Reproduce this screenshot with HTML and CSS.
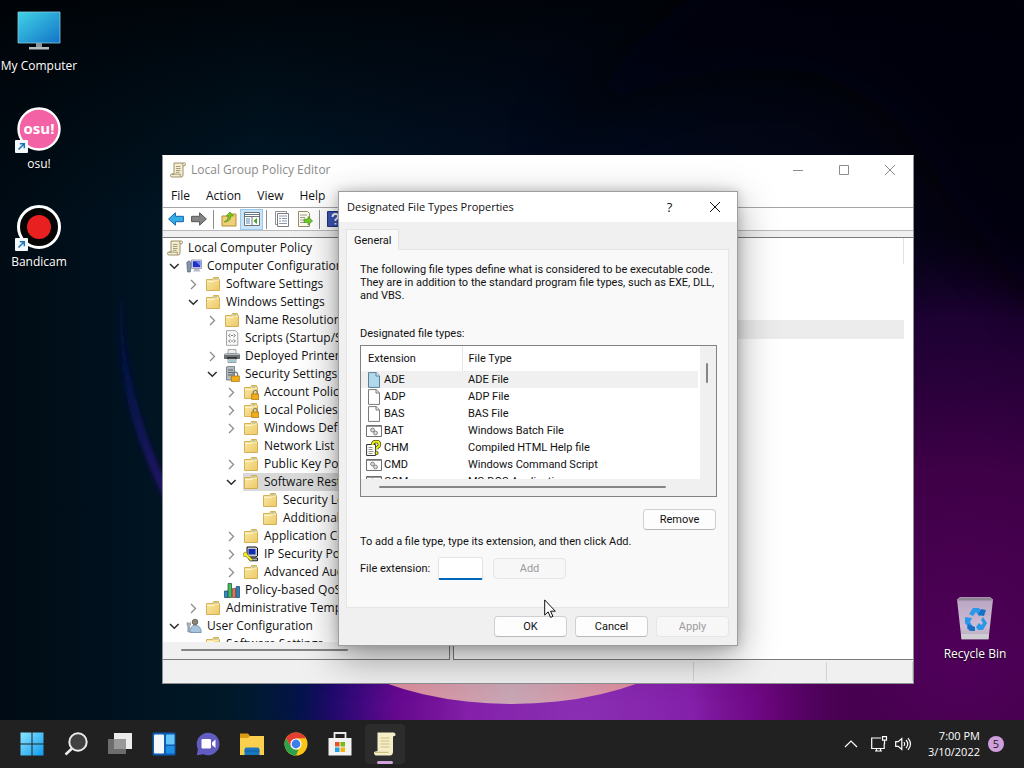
FILE: index.html
```html
<!DOCTYPE html>
<html lang="en">
<head>
<meta charset="utf-8">
<title>Desktop</title>
<link rel="stylesheet" href="styles.css">
</head>
<body>
<svg class="sprites" aria-hidden="true">
  <defs>
    <linearGradient id="gFolder" x1="0" y1="0" x2="1" y2="1"><stop offset="0" stop-color="#fbe9a9"/><stop offset="1" stop-color="#ecc964"/></linearGradient>
    <linearGradient id="gScreen" x1="0" y1="0" x2="1" y2="1"><stop offset="0" stop-color="#3fd3e6"/><stop offset="1" stop-color="#1473c8"/></linearGradient>
    <linearGradient id="gWin" x1="0" y1="0" x2="1" y2="1"><stop offset="0" stop-color="#8be6ff"/><stop offset="1" stop-color="#0f9bee"/></linearGradient>
    <linearGradient id="gBin" x1="0" y1="0" x2="0" y2="1"><stop offset="0" stop-color="#b9a4c2"/><stop offset=".7" stop-color="#cdbdd4"/><stop offset="1" stop-color="#b3aab8"/></linearGradient>
    <symbol id="scroll" viewBox="0 0 16 16">
      <path d="M4 1h10.500q1 .2 1 1.500t-1.500 1.300h-1V13q0 2-1.700 2H2Q.5 15 .5 13.500T2 12h2z" fill="#f3eed2" stroke="#93855c" stroke-width=".9"/>
      <path d="M2 12.200h8.500q-.9 1.500.6 2.600M13 3.800q-1.200-1 0-2.700M6 4.500h4.500M6 6.500h4.500M6 8.500h4.500M6 10.300h3.500" fill="none" stroke="#93855c" stroke-width=".8"/>
    </symbol>
    <symbol id="folder" viewBox="0 0 16 16">
      <path d="M1.500 14.500v-11h6l1-2h5v2h1v11z" fill="url(#gFolder)" stroke="#cfa84c" stroke-width=".9"/>
      <path d="M2 5.500h7l1.300-1.500H14" fill="none" stroke="#fff6cf" stroke-width="1"/>
      <path d="M9 3h3.500" stroke="#8fb3a0" stroke-width="1"/>
    </symbol>
    <symbol id="lockfolder" viewBox="0 0 16 16">
      <use href="#folder"/>
      <path d="M10.200 10V8.500a2 2 0 0 1 4 0V10" fill="none" stroke="#7a7a7a" stroke-width="1.200"/>
      <rect x="8.700" y="10" width="7" height="5.500" fill="#efad1c" stroke="#a87407" stroke-width=".7"/>
    </symbol>
    <symbol id="script" viewBox="0 0 16 16">
      <path d="M2.500.7h9l2.300 2.300v12.300H2.500z" fill="#fbfbfb" stroke="#989898" stroke-width=".9"/>
      <path d="M6.500 4L4.500 5.500l2 1.500M9.500 4l2 1.500-2 1.500M6.500 9.500L4.500 11l2 1.500M9.500 9.500l2 1.500-2 1.500M7 5.500h2M7 11h2" fill="none" stroke="#6b6b6b" stroke-width=".9"/>
    </symbol>
    <symbol id="printer" viewBox="0 0 16 16">
      <path d="M4 1.500h8V6H4z" fill="#e8eef2" stroke="#888" stroke-width=".7"/>
      <path d="M1 5.500h14l1 1.500v4H0V7z" fill="#6f7275"/>
      <path d="M1 6.500h14" stroke="#b7babd"/>
      <path d="M3 9h10v2H3z" fill="#2f3234"/>
      <path d="M4 11h8v3.500H4z" fill="#e9eef0" stroke="#777" stroke-width=".7"/>
      <path d="M5 13h6" stroke="#48a7bd"/>
    </symbol>
    <symbol id="server" viewBox="0 0 16 16">
      <path d="M2.500 1L5 .3h5.500V14H2.500z" fill="#b3bac0" stroke="#666d73" stroke-width=".8"/>
      <path d="M4 4h5M4 6.500h5M4 9h4" stroke="#59646c"/>
      <path d="M9 10V8.500a2.300 2.300 0 0 1 4.600 0V10" fill="none" stroke="#777" stroke-width="1.200"/>
      <rect x="7.300" y="10" width="8" height="5.500" fill="#efad1c" stroke="#a87407" stroke-width=".7"/>
    </symbol>
    <symbol id="computer" viewBox="0 0 16 16">
      <path d="M5.500 2h10v8.500h-10z" fill="#dfe2ef" stroke="#888ca8" stroke-width=".8"/>
      <path d="M6.800 3.200h7.500v6H6.800z" fill="#1d2fc4"/>
      <path d="M9.500 3.200h4.800V8z" fill="#6c84ef"/>
      <path d="M8.500 11h4.500l1.500 2.500H7z" fill="#b7b9c9"/>
      <path d="M.8 4.500q1-2 3-1.500l1.200 2-.7 9H1.500z" fill="#7c96ad" stroke="#46586b" stroke-width=".6"/>
    </symbol>
    <symbol id="ipsec" viewBox="0 0 16 16">
      <path d="M4 1h9l1.500 1v8l-1.500 1H4z" fill="#c9cbd0" stroke="#111" stroke-width="1"/>
      <path d="M5.500 3h7v5.500h-7z" fill="#102bb4"/>
      <path d="M5 12h9.500v2.800H7z" fill="#aeb0b6" stroke="#111" stroke-width=".9"/>
      <path d="M.5 7l3-1 1 2.500 5 5-1.500 1.700-5-4.700H.7z" fill="#f6ee1e" stroke="#6a6500" stroke-width=".5"/>
    </symbol>
    <symbol id="bars" viewBox="0 0 16 16">
      <path d="M.5 9h3.500v6.500H.5z" fill="#2e8ccc" stroke="#1c3d53" stroke-width=".7"/>
      <path d="M4 1.500h3.500v14H4z" fill="#3fbf58" stroke="#1c4a32" stroke-width=".7"/>
      <path d="M8.500 6.500h3v9h-3z" fill="#e2735a" stroke="#64402f" stroke-width=".7"/>
      <path d="M12.200 4.500h3.300v11h-3.300z" fill="#2882b8" stroke="#183b5e" stroke-width=".7"/>
    </symbol>
    <symbol id="user" viewBox="0 0 16 16">
      <circle cx="9" cy="4" r="2.800" fill="#8d8473" stroke="#4d4a44" stroke-width=".7"/>
      <path d="M4 14.500q0-7 5-7.300 6 .3 6.300 7.300z" fill="#a7c3e0" stroke="#5f7d9c" stroke-width=".7"/>
      <path d="M1 4.500l2 1 1.500-1v2.500L3.500 8v6H1.800V8L1 7z" fill="#a9b7c4" stroke="#65737f" stroke-width=".5"/>
    </symbol>
    <symbol id="closed" viewBox="0 0 16 16"><path d="M6 4l4.500 4.500L6 13" fill="none" stroke="#8b8b8b" stroke-width="1.300"/></symbol>
    <symbol id="open" viewBox="0 0 16 16"><path d="M4 6l4.300 4.300L12.600 6" fill="none" stroke="#2b2b2b" stroke-width="1.500"/></symbol>
    <symbol id="page" viewBox="0 0 16 16"><path d="M2.500.6h7.700l3.300 3.300v11.500h-11z" fill="#fff" stroke="#7a7a7a"/><path d="M10 .6V4h3.500" fill="none" stroke="#7a7a7a"/></symbol>
    <symbol id="pagesel" viewBox="0 0 16 16"><path d="M2.500.6h7.700l3.300 3.300v11.500h-11z" fill="#b1d9ee" stroke="#5d7e90"/><path d="M10 .6V4h3.500" fill="#e6f4fb" stroke="#5d7e90"/></symbol>
    <symbol id="batch" viewBox="0 0 16 16"><path d="M.5 2.500h15v11H.5z" fill="#fff" stroke="#707070"/><path d="M1 3.500h14" stroke="#9b9b9b"/><circle cx="6.500" cy="7" r="1.900" fill="#ddd" stroke="#828282"/><circle cx="9.500" cy="10" r="1.900" fill="#ddd" stroke="#828282"/></symbol>
    <symbol id="chm" viewBox="0 0 16 16"><path d="M.6 4.500h9v11h-9z" fill="#fff" stroke="#333"/><path d="M2.500 7.500h4M2.500 9.500h4M2.500 11.500h5M2.500 13.500h4" stroke="#777" stroke-width=".8"/><path d="M6.500 5q0-3.500 3.500-3.500t3.500 3q0 1.700-2 2.700-.9.500-.9 2" fill="none" stroke="#33330a" stroke-width="3.400"/><path d="M6.500 5q0-3.500 3.500-3.500t3.500 3q0 1.700-2 2.700-.9.500-.9 2" fill="none" stroke="#eef013" stroke-width="2"/><circle cx="10.600" cy="13" r="1.600" fill="#eef013" stroke="#33330a" stroke-width=".8"/></symbol>
    <symbol id="shortcut" viewBox="0 0 13 13"><rect width="13" height="13" rx="1" fill="#f4f8fb"/><path d="M3.500 9.500l5-5M4.800 3.800h4.500v4.500" fill="none" stroke="#1a74b8" stroke-width="1.500"/></symbol>
  </defs>
</svg>

<main class="desktop">
  <svg class="wallpaper" viewBox="0 0 1024 720" preserveAspectRatio="none" aria-hidden="true">
    <defs>
      <linearGradient id="wBase" x1="0" y1="0" x2="1" y2="0"><stop offset="0" stop-color="#000b14"/><stop offset=".25" stop-color="#001a2b"/><stop offset=".55" stop-color="#020c24"/><stop offset="1" stop-color="#05010f"/></linearGradient>
      <linearGradient id="wTop" x1="0" y1="0" x2="0" y2="1"><stop offset="0" stop-color="#000307" stop-opacity=".9"/><stop offset=".3" stop-color="#000307" stop-opacity="0"/></linearGradient>
      <radialGradient id="wPurple" cx="960" cy="660" r="430" gradientUnits="userSpaceOnUse"><stop offset="0" stop-color="#50005a"/><stop offset=".45" stop-color="#3e0046"/><stop offset=".8" stop-color="#26003f" stop-opacity=".7"/><stop offset="1" stop-color="#10002a" stop-opacity="0"/></radialGradient>
      <radialGradient id="wBlue" cx="400" cy="700" r="170" gradientUnits="userSpaceOnUse"><stop offset="0" stop-color="#1a0f96"/><stop offset=".4" stop-color="#080a6c" stop-opacity=".9"/><stop offset="1" stop-color="#001a44" stop-opacity="0"/></radialGradient>
      <radialGradient id="wGlow" cx="580" cy="720" r="280" gradientUnits="userSpaceOnUse"><stop offset="0" stop-color="#8a30b4"/><stop offset=".4" stop-color="#8420aa"/><stop offset=".65" stop-color="#7a0890" stop-opacity=".8"/><stop offset="1" stop-color="#600070" stop-opacity="0"/></radialGradient>
      <linearGradient id="wSun" x1="0" y1="0" x2="1" y2="0"><stop offset="0" stop-color="#c7649a"/><stop offset=".25" stop-color="#dc8d9c"/><stop offset=".5" stop-color="#c8a6b5"/><stop offset=".8" stop-color="#e2899b"/><stop offset="1" stop-color="#b65aa8"/></linearGradient>
      <linearGradient id="wArc" x1="0" y1="280" x2="0" y2="580" gradientUnits="userSpaceOnUse"><stop offset="0" stop-color="#001d55" stop-opacity="0"/><stop offset=".35" stop-color="#0a1266"/><stop offset=".7" stop-color="#3c12a0"/><stop offset="1" stop-color="#20108a"/></linearGradient>
      <filter id="soft"><feGaussianBlur stdDeviation="3"/></filter>
      <filter id="softer"><feGaussianBlur stdDeviation="24"/></filter>
    </defs>
    <rect width="1024" height="720" fill="url(#wBase)"/>
    <rect width="1024" height="720" fill="url(#wTop)"/>
    <rect width="1024" height="720" fill="url(#wPurple)"/>
    <rect width="1024" height="720" fill="url(#wBlue)"/>
    <rect width="1024" height="720" fill="url(#wGlow)"/>
    <path d="M122 290Q114 400 180 520" fill="none" stroke="url(#wArc)" stroke-width="5" filter="url(#soft)"/>
    <path d="M540 155Q640 60 800 70Q900 90 950 200L1060 330V-40H740Q600 60 540 155z" fill="#020008" opacity=".7" filter="url(#softer)"/>
    <ellipse cx="512" cy="575" rx="232" ry="129" fill="url(#wSun)"/>
  </svg>

  <nav class="shortcuts" aria-label="Desktop shortcuts">
    <a class="shortcut" href="#computer-link">
      <svg class="shortcut-icon" viewBox="0 0 48 48"><path d="M3 5h42v31H3z" fill="url(#gScreen)" stroke="#8cc9dc" stroke-width=".8"/><path d="M21 36h6v5h-6z" fill="#8b969d"/><path d="M14 40h20v2.500H14z" fill="#b5bec4"/></svg>
      <span>My Computer</span>
    </a>
    <a class="shortcut" href="#osu">
      <svg class="shortcut-icon" viewBox="0 0 48 48"><circle cx="24" cy="24" r="20.500" fill="#f362a4" stroke="#fff" stroke-width="2.400"/><text x="24" y="29" class="osu-text">osu!</text><use href="#shortcut" x="0" y="35" width="13" height="13"/></svg>
      <span>osu!</span>
    </a>
    <a class="shortcut" href="#bandicam">
      <svg class="shortcut-icon" viewBox="0 0 48 48"><circle cx="24" cy="24" r="20.500" fill="#050505" stroke="#fff" stroke-width="3"/><circle cx="24" cy="24" r="12" fill="#e8201f"/><use href="#shortcut" x="0" y="35" width="13" height="13"/></svg>
      <span>Bandicam</span>
    </a>
  </nav>

  <a class="shortcut recycle" href="#recycle">
    <svg class="shortcut-icon" viewBox="0 0 48 48"><path d="M6 4.500L9 2h30l3 2.500-4.500 40H10.500z" fill="url(#gBin)"/><path d="M6 5.500L9 2.500h30l3 3z" fill="#8e8494"/><path d="M10 39h28l-.6 5H10.600z" fill="#cfcbd2"/><g fill="#2a97ea"><path d="M18 19l4-6h6l4 6-4 2-3-4-3 4z"/><path d="M30 14l5 1-2 6-6-1z" fill="#1670c8"/><path d="M14 22l7 1-2 4 3 5-4 1-4-5z"/><path d="M17 29l7 3v4h-5l-3-3z" fill="#1670c8"/><path d="M32 22l4 6-4 7h-5l-2-3 3-4 2 2 2-2-2-3z"/></g></svg>
    <span>Recycle Bin</span>
  </a>

  <section class="window" aria-label="Local Group Policy Editor">
    <header class="titlebar">
      <svg class="i16"><use href="#scroll"/></svg>
      <h1>Local Group Policy Editor</h1>
      <button class="caption" aria-label="Minimize"><svg viewBox="0 0 12 12"><path d="M1 6.500h10"/></svg></button>
      <button class="caption" aria-label="Maximize"><svg viewBox="0 0 12 12"><path d="M1.500 1.500h9v9h-9z"/></svg></button>
      <button class="caption" aria-label="Close"><svg viewBox="0 0 12 12"><path d="M1 1l10 10M11 1L1 11"/></svg></button>
    </header>
    <nav class="menubar"><button>File</button><button>Action</button><button>View</button><button>Help</button></nav>
    <div class="toolbar">
      <button aria-label="Back"><svg class="i16" viewBox="0 0 16 16"><path d="M.6 8l6.800-6.200v3.500h8v5.400h-8v3.500z" fill="#35aee8" stroke="#1565a8"/></svg></button>
      <button aria-label="Forward"><svg class="i16" viewBox="0 0 16 16"><path d="M15.400 8L8.600 1.800v3.500h-8v5.400h8v3.500z" fill="#858585" stroke="#555"/></svg></button>
      <i></i>
      <button aria-label="Up"><svg class="i16" viewBox="0 0 16 16"><path d="M1 5h7l1-2h6v12H1z" fill="#efcf78" stroke="#b78e34"/><path d="M3 11q4-1 4.500-6H5l4-4 3.500 4H10q-.5 6-7 6z" fill="#76c61f" stroke="#4a8b0e" stroke-width=".6"/></svg></button>
      <button class="pressed" aria-label="Console tree"><svg class="i16" viewBox="0 0 16 16"><path d="M.5 1.500h15v13H.5z" fill="#fff" stroke="#69747d"/><path d="M1 3.500h14M1 5.500h14M8 5.500v9" stroke="#69747d"/><path d="M2 8h4M2 10h4M2 12h4" stroke="#5d88b8"/><path d="M13 7v6L9.500 10z" fill="#3da51c"/></svg></button>
      <i></i>
      <button aria-label="Properties"><svg class="i16" viewBox="0 0 16 16"><path d="M1.500.5h11v13h-11z" fill="#fff" stroke="#8f8f8f"/><path d="M3.500 2.500h11v13h-11z" fill="#fff" stroke="#7e7e7e"/><path d="M5 5h8M5 7.500h2M8 7.500h5M5 10h2M8 10h5M5 12.500h8" stroke="#8799b0"/></svg></button>
      <button aria-label="Export list"><svg class="i16" viewBox="0 0 16 16"><path d="M1.500.5h9l2 2v13h-11z" fill="#fffdf0" stroke="#948c68"/><path d="M3 4h7M3 6.500h5M3 9h4M3 11.500h5" stroke="#9a9a9a"/><path d="M7 8h4V5.500L15.600 10 11 14v-2.500H7z" fill="#72c92d" stroke="#408f13" stroke-width=".6"/></svg></button>
      <i></i>
      <button aria-label="Help"><svg class="i16" viewBox="0 0 16 16"><path d="M.5.500h15v15H.5z" fill="#3c54b5" stroke="#22357f"/><path d="M5.500 6q0-3 3-3t2.500 2.500-2.500 3V10M8.500 12v1.500" fill="none" stroke="#fff" stroke-width="1.800"/></svg></button>
    </div>
    <div class="panes">
      <div class="tree-pane">
        <ul class="tree">
          <li class="root"><svg class="ic"><use href="#scroll"/></svg>Local Computer Policy</li>
          <li><svg class="tw"><use href="#open"/></svg><svg class="ic"><use href="#computer"/></svg>Computer Configuration</li>
          <li class="l1"><svg class="tw"><use href="#closed"/></svg><svg class="ic"><use href="#folder"/></svg>Software Settings</li>
          <li class="l1"><svg class="tw"><use href="#open"/></svg><svg class="ic"><use href="#folder"/></svg>Windows Settings</li>
          <li class="l2"><svg class="tw"><use href="#closed"/></svg><svg class="ic"><use href="#folder"/></svg>Name Resolution</li>
          <li class="l2"><svg class="tw"></svg><svg class="ic"><use href="#script"/></svg>Scripts (Startup/Sh</li>
          <li class="l2"><svg class="tw"><use href="#closed"/></svg><svg class="ic"><use href="#printer"/></svg>Deployed Printers</li>
          <li class="l2"><svg class="tw"><use href="#open"/></svg><svg class="ic"><use href="#server"/></svg>Security Settings</li>
          <li class="l3"><svg class="tw"><use href="#closed"/></svg><svg class="ic"><use href="#lockfolder"/></svg>Account Polici</li>
          <li class="l3"><svg class="tw"><use href="#closed"/></svg><svg class="ic"><use href="#lockfolder"/></svg>Local Policies</li>
          <li class="l3"><svg class="tw"><use href="#closed"/></svg><svg class="ic"><use href="#folder"/></svg>Windows Defen</li>
          <li class="l3"><svg class="tw"></svg><svg class="ic"><use href="#folder"/></svg>Network List M</li>
          <li class="l3"><svg class="tw"><use href="#closed"/></svg><svg class="ic"><use href="#folder"/></svg>Public Key Poli</li>
          <li class="l3"><svg class="tw"><use href="#open"/></svg><span class="selected"><svg class="ic"><use href="#folder"/></svg>Software Restri</span></li>
          <li class="l4"><svg class="tw"></svg><svg class="ic"><use href="#folder"/></svg>Security Lev</li>
          <li class="l4"><svg class="tw"></svg><svg class="ic"><use href="#folder"/></svg>Additional R</li>
          <li class="l3"><svg class="tw"><use href="#closed"/></svg><svg class="ic"><use href="#folder"/></svg>Application Co</li>
          <li class="l3"><svg class="tw"><use href="#closed"/></svg><svg class="ic"><use href="#ipsec"/></svg>IP Security Poli</li>
          <li class="l3"><svg class="tw"><use href="#closed"/></svg><svg class="ic"><use href="#folder"/></svg>Advanced Aud</li>
          <li class="l2"><svg class="tw"></svg><svg class="ic"><use href="#bars"/></svg>Policy-based QoS</li>
          <li class="l1"><svg class="tw"><use href="#closed"/></svg><svg class="ic"><use href="#folder"/></svg>Administrative Templ</li>
          <li><svg class="tw"><use href="#open"/></svg><svg class="ic"><use href="#user"/></svg>User Configuration</li>
          <li class="l1"><svg class="tw"></svg><svg class="ic"><use href="#folder"/></svg>Software Settings</li>
        </ul>
        <div class="hscroll"><span></span></div>
      </div>
      <div class="detail"><div class="detail-head"></div><div class="detail-row"></div></div>
    </div>
    <footer class="statusbar"><span></span><span></span><span></span></footer>
  </section>

  <section class="dialog" role="dialog" aria-label="Designated File Types Properties">
    <header class="dialog-title">
      <h2>Designated File Types Properties</h2>
      <button class="caption help" aria-label="Help">?</button>
      <button class="caption" aria-label="Close"><svg viewBox="0 0 12 12"><path d="M1 1l10 10M11 1L1 11"/></svg></button>
    </header>
    <div class="dialog-body">
      <button class="tab">General</button>
      <div class="panel">
        <p class="intro">The following file types define what is considered to be executable code. They are in addition to the standard program file types, such as EXE, DLL, and VBS.</p>
        <p class="list-label">Designated file types:</p>
        <div class="listbox">
          <div class="list-view">
            <table>
              <thead><tr><th>Extension</th><th>File Type</th></tr></thead>
              <tbody>
                <tr class="current"><td><svg><use href="#pagesel"/></svg>ADE</td><td>ADE File</td></tr>
                <tr><td><svg><use href="#page"/></svg>ADP</td><td>ADP File</td></tr>
                <tr><td><svg><use href="#page"/></svg>BAS</td><td>BAS File</td></tr>
                <tr><td><svg><use href="#batch"/></svg>BAT</td><td>Windows Batch File</td></tr>
                <tr><td><svg><use href="#chm"/></svg>CHM</td><td>Compiled HTML Help file</td></tr>
                <tr><td><svg><use href="#batch"/></svg>CMD</td><td>Windows Command Script</td></tr>
                <tr><td><svg><use href="#batch"/></svg>COM</td><td>MS-DOS Application</td></tr>
              </tbody>
            </table>
          </div>
          <div class="vscroll"><span></span></div>
          <div class="list-hscroll"><span></span></div>
        </div>
        <div class="remove-row"><button class="btn">Remove</button></div>
        <p class="hint">To add a file type, type its extension, and then click Add.</p>
        <div class="add-row"><label for="ext">File extension:</label><input id="ext" type="text"><button class="btn" disabled>Add</button></div>
      </div>
      <div class="actions"><button class="btn">OK</button><button class="btn">Cancel</button><button class="btn" disabled>Apply</button></div>
    </div>
  </section>

  <svg class="cursor" viewBox="0 0 12 20" aria-hidden="true"><path d="M.7.900v15.200l3.500-3.200 2.300 5.500 2.400-1-2.300-5.200h4.700z" fill="#fff" stroke="#111"/></svg>
</main>

<footer class="taskbar">
  <div class="apps">
    <button aria-label="Start"><svg viewBox="0 0 24 24"><path d="M.5.500h11v11H.5zM12.500.500h11v11h-11zM.5 12.500h11v11H.5zM12.500 12.500h11v11h-11z" fill="url(#gWin)"/></svg></button>
    <button aria-label="Search"><svg viewBox="0 0 24 24"><circle cx="14" cy="10" r="8.700" fill="#414141" stroke="#ececec" stroke-width="2"/><path d="M8 16.500L1.500 22.500" stroke="#ececec" stroke-width="2.500"/></svg></button>
    <button aria-label="Task view"><svg viewBox="0 0 24 24"><path d="M6 1h18v16H6z" fill="#ececec"/><path d="M0 7h18v15H0z" fill="#6d6d6d"/><path d="M6 7h12v10H6z" fill="#999"/></svg></button>
    <button aria-label="Widgets"><svg viewBox="0 0 24 24"><rect x=".5" y=".5" width="23" height="23" rx="1.500" fill="#0f5db4"/><rect x="2" y="2.500" width="10" height="19" rx="1" fill="#f4f8fb"/><rect x="14" y="2.500" width="8.500" height="10" rx="1" fill="#67c6f8"/><rect x="14" y="14" width="8.500" height="7.500" rx="1" fill="#1b90e4"/></svg></button>
    <button aria-label="Chat"><svg viewBox="0 0 24 24"><path d="M12 .7a11.300 11.300 0 1 1-4.500 21.600L.8 23.300 1.900 17A11.300 11.300 0 0 1 12 .7z" fill="#625bc0"/><rect x="5.500" y="7" width="9.500" height="9.500" rx="1.300" fill="#fff"/><path d="M16 10.500l3.500-3v8.500l-3.500-3z" fill="#fff"/></svg></button>
    <button aria-label="File Explorer"><svg viewBox="0 0 24 24"><path d="M0 1.500h8l2 2.500h14v19H0z" fill="#dd9b13"/><path d="M0 6h8l2-2h14v19H0z" fill="#fbcf4e"/><path d="M4.500 23v-5.500q0-2 2-2h11q2 0 2 2V23z" fill="#1a76bf"/><path d="M4.500 19h15" stroke="#0f5d9f"/></svg></button>
    <button aria-label="Chrome"><svg viewBox="0 0 24 24"><circle cx="12" cy="12" r="11.500" fill="#fbc417"/><path d="M2 6.300A11.500 11.500 0 0 1 22 6.300H12L7 15z" fill="#e23e31"/><path d="M2 6.300L7 15l5 2.700h2.500L12 23.500A11.500 11.500 0 0 1 2 6.300z" fill="#2da24c"/><circle cx="12" cy="12" r="5.600" fill="#fff"/><circle cx="12" cy="12" r="4.400" fill="#3d7eea"/></svg></button>
    <button aria-label="Store"><svg viewBox="0 0 24 24"><path d="M6.500 6V1h11v5" fill="none" stroke="#eaeaea" stroke-width="1.800"/><path d="M.5 6h23v17.500H.5z" fill="#f2f2f2"/><path d="M7 10h4.500v4.500H7z" fill="#e75325"/><path d="M12.500 10H17v4.500h-4.500z" fill="#7bb90e"/><path d="M7 15.500h4.500V20H7z" fill="#22a1e4"/><path d="M12.500 15.500H17V20h-4.500z" fill="#f5b40d"/></svg></button>
    <button class="active" aria-label="Local Group Policy Editor"><svg viewBox="0 0 24 24"><path d="M4.500.5h16.500q2 1 1.500 3l-2.500 1v15q0 3.500-2.500 4H2.500Q.5 22.500 1 20l3.500-1z" fill="#f4edc8"/><path d="M2 20.300h13.500M7.500 6h9M7.500 9h9M7.500 12h9M7.500 15h9" stroke="#cdbf83" stroke-width="1.200"/></svg></button>
  </div>
  <div class="tray">
    <button aria-label="Show hidden icons"><svg viewBox="0 0 16 16"><path d="M2 11l6-6 6 6"/></svg></button>
    <button aria-label="Network"><svg viewBox="0 0 16 16"><path d="M10 2H.7v10.500h12.500V7.500M4 15h7M5.500 12.500V15M9.500 12.500V15M11.500.700h4v3.500h-4zM13.500 4.200V8"/></svg></button>
    <button aria-label="Volume"><svg viewBox="0 0 16 16"><path d="M.7 5.700h2.500L6.800 2.500v11L3.200 10.300H.7zM9 6q1.500 2 0 4M11 4q3.500 4 0 8M13 2.200q5 5.800 0 11.600"/></svg></button>
    <time class="clock">7:00 PM<br>3/10/2022</time>
    <button class="badge" aria-label="5 notifications">5</button>
  </div>
</footer>
</body>
</html>
```
FILE: styles.css
```css
* { box-sizing: border-box; }

body {
  margin: 0;
  height: 100vh;
  display: flex;
  flex-direction: column;
  overflow: hidden;
  font: 12px/18px "Open Sans", "Noto Sans", sans-serif;
  color: #111;
  background: #000b14;
}

button, input { font: inherit; color: inherit; }
button { padding: 0; border: 0; background: none; }
h1, h2, p { margin: 0; font-size: inherit; font-weight: normal; }
.sprites { position: absolute; width: 0; height: 0; }

/* Desktop */
.desktop { position: relative; flex: 1; min-height: 0; overflow: hidden; }
.wallpaper { position: absolute; inset: 0; width: 100%; height: 100%; }

.shortcuts {
  position: absolute;
  top: 7px;
  left: 0;
  display: flex;
  flex-direction: column;
  gap: 30px;
}
.shortcut {
  display: flex;
  flex-direction: column;
  align-items: center;
  gap: 2px;
  width: 78px;
  color: #fff;
  text-decoration: none;
  white-space: nowrap;
}
.shortcut span { text-shadow: 0 1px 2px #000; }
.shortcut-icon { width: 48px; height: 48px; }
.osu-text { font: bold 15px "Open Sans", sans-serif; fill: #fff; text-anchor: middle; }
.recycle { position: absolute; right: 10px; bottom: 57px; }

/* Policy editor window */
.window {
  position: absolute;
  inset: 155px 110px 36px 162px;
  display: flex;
  flex-direction: column;
  background: #fff;
  border: 1px solid #8c8f94;
  border-top-color: #fff;
}
.titlebar { display: flex; align-items: center; height: 28px; padding-left: 7px; color: #8b8b8b; }
.titlebar h1 { flex: 1; padding-left: 5px; }
.caption { width: 46px; height: 28px; display: grid; place-items: center; }
.caption svg { width: 12px; height: 12px; fill: none; stroke: currentColor; stroke-width: 1; }
.i16 { width: 16px; height: 16px; flex: none; display: block; }

.menubar { display: flex; gap: 16px; height: 24px; padding: 0 8px; border-bottom: 1px solid #a6a6a6; }
.toolbar { display: flex; align-items: center; height: 23px; padding-left: 1px; border-bottom: 1px solid #b9b9b9; }
.toolbar button { width: 23px; height: 21px; display: grid; place-items: center; }
.toolbar i { width: 1px; height: 19px; margin: 0 3px; background: #8d8d8d; }
.toolbar .pressed { background: #cce4f7; border: 1px solid #99c9ef; }

.panes { flex: 1; min-height: 0; display: flex; gap: 3px; padding-top: 6px; background: #f0f0f0; }
.tree-pane {
  width: 287px;
  display: flex;
  flex-direction: column;
  background: #fff;
  border: 1px solid #7b7b7b;
  border-left: 0;
}
.tree { flex: 1; min-height: 0; margin: 0; padding: 1px 0 0; overflow: hidden; list-style: none; }
.tree li { display: flex; align-items: center; height: 18px; padding-left: 3px; white-space: nowrap; }
.tree .root { padding-left: 4px; }
.tree .l1 { padding-left: 22px; }
.tree .l2 { padding-left: 41px; }
.tree .l3 { padding-left: 60px; }
.tree .l4 { padding-left: 79px; }
.tw { width: 16px; height: 16px; margin-right: 4px; flex: none; }
.ic { width: 16px; height: 16px; margin-right: 5px; flex: none; }
.selected { flex: 1; display: flex; align-items: center; background: #d9d9d9; }
.hscroll { height: 17px; padding: 7px 101px 0 18px; background: #f0f0f0; }
.hscroll span { display: block; height: 2px; border-radius: 1px; background: #858585; }

.detail { flex: 1; padding-right: 9px; background: #fff; border: 1px solid #7b7b7b; border-right: 0; }
.detail-head { height: 26px; border-right: 1px solid #e2e2e2; }
.detail-row { height: 19px; margin-top: 56px; background: #ececec; }

.statusbar { display: flex; height: 23px; background: #f0f0f0; }
.statusbar span { margin: 2px 0; border-right: 1px solid #d2d2d2; }
.statusbar span:nth-child(1) { flex: 1; }
.statusbar span:nth-child(2) { width: 133px; }
.statusbar span:nth-child(3) { width: 86px; }

/* Properties dialog */
.dialog {
  position: absolute;
  top: 191px;
  left: 338px;
  width: 400px;
  background: #f0f0f0;
  border: 1px solid #9d9d9d;
  box-shadow: 0 12px 36px rgba(0, 0, 0, .38), 0 0 10px rgba(0, 0, 0, .2);
}
.dialog-title { display: flex; align-items: center; height: 30px; padding-left: 8px; background: #fff; font-size: 11px; }
.dialog-title h2 { flex: 1; }
.dialog .caption { width: 45px; }
.dialog .help { font-size: 13px; }
.dialog-body { padding: 7px 8px 8px 7px; font: 11px/13px Roboto, "Liberation Sans", sans-serif; }
.tab {
  display: block;
  position: relative;
  height: 21px;
  margin-bottom: -1px;
  padding: 0 7px;
  background: #f9f9f9;
  border: 1px solid #e2e2e2;
  border-bottom: 0;
}
.panel { padding: 13px 11px 27px 13px; background: #f9f9f9; border: 1px solid #e5e5e5; }
.list-label { margin-top: 25px; }
.listbox {
  display: grid;
  grid-template: 133px 17px / 1fr 16px;
  margin-top: 5px;
  background: #f0f0f0;
  border: 1px solid #828282;
}
.list-view { overflow: hidden; background: #fff; }
.listbox table { width: calc(100% - 2px); border-collapse: collapse; table-layout: fixed; }
.listbox th { height: 25px; padding: 0 0 0 6px; text-align: left; font-weight: normal; }
.listbox th:first-child { width: 101px; padding-left: 7px; border-right: 1px solid #e5e5e5; }
.listbox td { height: 17px; padding: 0 0 0 6px; white-space: nowrap; }
.listbox td:first-child { padding-left: 5px; }
.listbox td svg { width: 16px; height: 16px; margin-right: 2px; vertical-align: middle; }
.current { background: #f0f0f0; }
.vscroll { display: flex; justify-content: center; padding: 17px 2px 0 0; }
.vscroll span { width: 2px; height: 20px; background: #858585; border-radius: 1px; }
.list-hscroll { grid-column: 1 / -1; padding: 7px 50px 0 18px; }
.list-hscroll span { display: block; height: 2px; background: #858585; border-radius: 1px; }

.btn {
  width: 73px;
  height: 21px;
  background: #fdfdfd;
  border: 1px solid #d0d0d0;
  border-bottom-color: #b8b8b8;
  border-radius: 4px;
}
.btn:disabled { color: #9b9b9b; background: #f7f7f7; border-color: #e6e6e6; }
.remove-row { display: flex; justify-content: flex-end; margin: 12px 1px 0 0; }
.hint { margin-top: 5px; }
.add-row { display: flex; align-items: center; margin-top: 9px; }
.add-row label { width: 78px; }
.add-row input {
  width: 45px;
  height: 23px;
  margin-right: 10px;
  padding: 2px 4px;
  background: #fff;
  border: 1px solid #e3e3e3;
  border-bottom: 2px solid #0067b8;
  border-radius: 2px;
  outline: 0;
}
.actions { display: flex; justify-content: flex-end; gap: 8px; margin-top: 8px; }
.cursor { position: absolute; top: 599px; left: 544px; width: 12px; height: 20px; }

/* Taskbar */
.taskbar {
  display: flex;
  justify-content: space-between;
  align-items: center;
  height: 48px;
  padding: 0 20px 0 10px;
  background: #212121;
  color: #fff;
}
.apps, .tray { display: flex; align-items: center; }
.apps { height: 100%; }
.apps button { position: relative; width: 44px; height: 40px; display: grid; place-items: center; }
.apps svg { width: 24px; height: 24px; }
.apps .active { width: 40px; margin-left: 3px; background: #2c2c2c; border-radius: 4px; }
.active::after {
  content: "";
  position: absolute;
  bottom: 0;
  left: 12px;
  right: 12px;
  height: 3px;
  border-radius: 2px;
  background: #cfa5d9;
}
.tray { gap: 8px; }
.tray button { display: grid; place-items: center; }
.tray svg { width: 16px; height: 16px; fill: none; stroke: #fff; stroke-width: 1.200; overflow: visible; }
.tray button:first-child { margin-right: 4px; }
.clock { width: 60px; margin-left: 1px; font-size: 11px; line-height: 16px; text-align: right; white-space: nowrap; }
.tray .badge { width: 16px; height: 16px; border-radius: 50%; background: #cf9fdb; color: #1b1b1b; font-size: 11px; line-height: 16px; }
```
